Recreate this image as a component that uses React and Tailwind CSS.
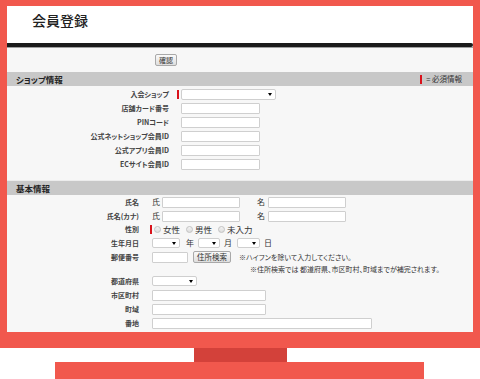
import React from 'react';

const JP = "font-['Noto_Sans_CJK_JP','Noto_Sans',sans-serif] [font-feature-settings:'palt'] leading-none";

const Input = ({ className = '' }) => (
  <div className={`h-[11px] bg-white border border-[#cfcfcf] rounded-[1px] shrink-0 ${className}`} />
);

const Select = ({ className = '' }) => (
  <div className={`h-[10px] bg-white border border-[#cfcfcf] rounded-[2px] shrink-0 flex items-center justify-end pr-[3px] ${className}`}>
    <span className="w-0 h-0 border-l-[2px] border-r-[2px] border-t-[3px] border-l-transparent border-r-transparent border-t-black" />
  </div>
);

const Mark = ({ className = '' }) => <span className={`w-[2px] h-[9px] bg-[#d9121b] shrink-0 ${className}`} />;

const Radio = ({ label }) => (
  <div className="flex items-center gap-[2px] mr-[6px]">
    <span className="w-[7px] h-[7px] rounded-full border border-[#c2c2c2] bg-gradient-to-b from-[#f4f4f4] to-[#dcdcdc]" />
    <span className="text-[8.5px] text-[#333]">{label}</span>
  </div>
);

const ShopRow = ({ label, required, children }) => (
  <div className="h-[14px] flex items-center">
    <div className="w-[162px] text-right text-[7px] font-bold text-[#444]">{label}</div>
    <div className="w-[12px] flex pl-[8px]">{required && <Mark />}</div>
    {children}
  </div>
);

const BaseRow = ({ label, required, h = 'h-[14px]', children }) => (
  <div className={`${h} flex items-center`}>
    <div className="w-[132px] text-right text-[7px] font-bold text-[#444]">{label}</div>
    <div className="w-[13px] flex pl-[11px]">{required && <Mark />}</div>
    {children}
  </div>
);

const SectionHead = ({ title, right }) => (
  <div className="h-[14px] bg-[#c8c8c8] flex items-center justify-between pl-[9px] pr-[11px]">
    <span className="text-[8.5px] font-bold text-[#222]">{title}</span>
    {right}
  </div>
);

export default function App() {
  return (
    <div className={`w-[480px] h-[379px] bg-white overflow-hidden ${JP}`}>
      {/* monitor */}
      <div className="bg-[#f1584d] pt-[6px] px-[7px] pb-[16px]">
        <div className="h-[326px] bg-[#f7f7f7] overflow-hidden flex flex-col">
          <div className="h-[37px] bg-white pl-[25px] pt-[7px] shrink-0">
            <h1 className="text-[14px] leading-[14px] font-medium text-[#222]">会員登録</h1>
          </div>
          <div className="h-[4px] bg-[#1b1b1b] rounded-r-[2px] shrink-0" />
          <div className="h-[1px] bg-[#a0a0a0] shrink-0" />

          <div className="h-[18px] pt-[6px] pl-[148px] flex items-start shrink-0">
            <button className="w-[22px] h-[12px] border border-[#a9a9a9] rounded-[2px] bg-gradient-to-b from-[#fafafa] to-[#dedede] text-[7px] leading-none text-[#333] flex items-center justify-center">
              確認
            </button>
          </div>

          <div className="mt-[6px] shrink-0">
            <SectionHead
              title="ショップ情報"
              right={
                <span className="flex items-center gap-[4px] text-[7.5px] text-[#333]">
                  <Mark className="h-[7px]" />= 必須情報
                </span>
              }
            />
          </div>

          <div className="pt-[1px] shrink-0">
            <ShopRow label="入会ショップ" required>
              <Select className="w-[95px] h-[11px]" />
            </ShopRow>
            <ShopRow label="店舗カード番号"><Input className="w-[79px]" /></ShopRow>
            <ShopRow label="PINコード"><Input className="w-[79px]" /></ShopRow>
            <ShopRow label="公式ネットショップ会員ID"><Input className="w-[79px]" /></ShopRow>
            <ShopRow label="公式アプリ会員ID"><Input className="w-[79px]" /></ShopRow>
            <ShopRow label="ECサイト会員ID"><Input className="w-[79px]" /></ShopRow>
          </div>

          <div className="mt-[9px] border-t border-[#ececec] shrink-0">
            <SectionHead title="基本情報" />
          </div>

          <div className="shrink-0">
            <BaseRow label="氏名">
              <span className="text-[8px] text-[#333] w-[10px]">氏</span>
              <Input className="w-[78px]" />
              <span className="text-[8px] text-[#333] ml-[17px] w-[11px]">名</span>
              <Input className="w-[78px]" />
            </BaseRow>
            <BaseRow label="氏名(カナ)">
              <span className="text-[8px] text-[#333] w-[10px]">氏</span>
              <Input className="w-[78px]" />
              <span className="text-[8px] text-[#333] ml-[17px] w-[11px]">名</span>
              <Input className="w-[78px]" />
            </BaseRow>
            <BaseRow label="性別" required h="h-[13px]">
              <div className="flex items-center ml-[2px]">
                <Radio label="女性" />
                <Radio label="男性" />
                <Radio label="未入力" />
              </div>
            </BaseRow>
            <BaseRow label="生年月日">
              <Select className="w-[28px]" />
              <span className="text-[8px] text-[#333] ml-[6px]">年</span>
              <Select className="w-[22px] ml-[4px]" />
              <span className="text-[8px] text-[#333] ml-[4px]">月</span>
              <Select className="w-[23px] ml-[5px]" />
              <span className="text-[8px] text-[#333] ml-[4px]">日</span>
            </BaseRow>
            <BaseRow label="郵便番号">
              <Input className="w-[36px]" />
              <button className="ml-[5px] w-[38px] h-[12px] border border-[#a9a9a9] rounded-[2px] bg-gradient-to-b from-[#fafafa] to-[#dedede] text-[7.5px] leading-none text-[#333] flex items-center justify-center">
                住所検索
              </button>
              <span className="ml-[8px] text-[7px] text-[#333] whitespace-nowrap">※ハイフンを除いて入力してください。</span>
            </BaseRow>
            <div className="h-[10px] flex items-center pl-[243px]">
              <span className="text-[7px] text-[#333] whitespace-nowrap">※住所検索では 都道府県、市区町村、町域までが補完されます。</span>
            </div>
            <BaseRow label="都道府県">
              <Select className="w-[45px]" />
            </BaseRow>
            <BaseRow label="市区町村"><Input className="w-[114px]" /></BaseRow>
            <BaseRow label="町域"><Input className="w-[114px]" /></BaseRow>
            <BaseRow label="番地"><Input className="w-[220px]" /></BaseRow>
            <BaseRow label="建物名"><Input className="w-[220px]" /></BaseRow>
          </div>
        </div>
      </div>
      {/* stand */}
      <div className="ml-[194px] w-[93px] h-[14px] bg-[#d3413a]" />
      <div className="ml-[55px] w-[369px] h-[17px] bg-[#f1584d]" />
    </div>
  );
}
